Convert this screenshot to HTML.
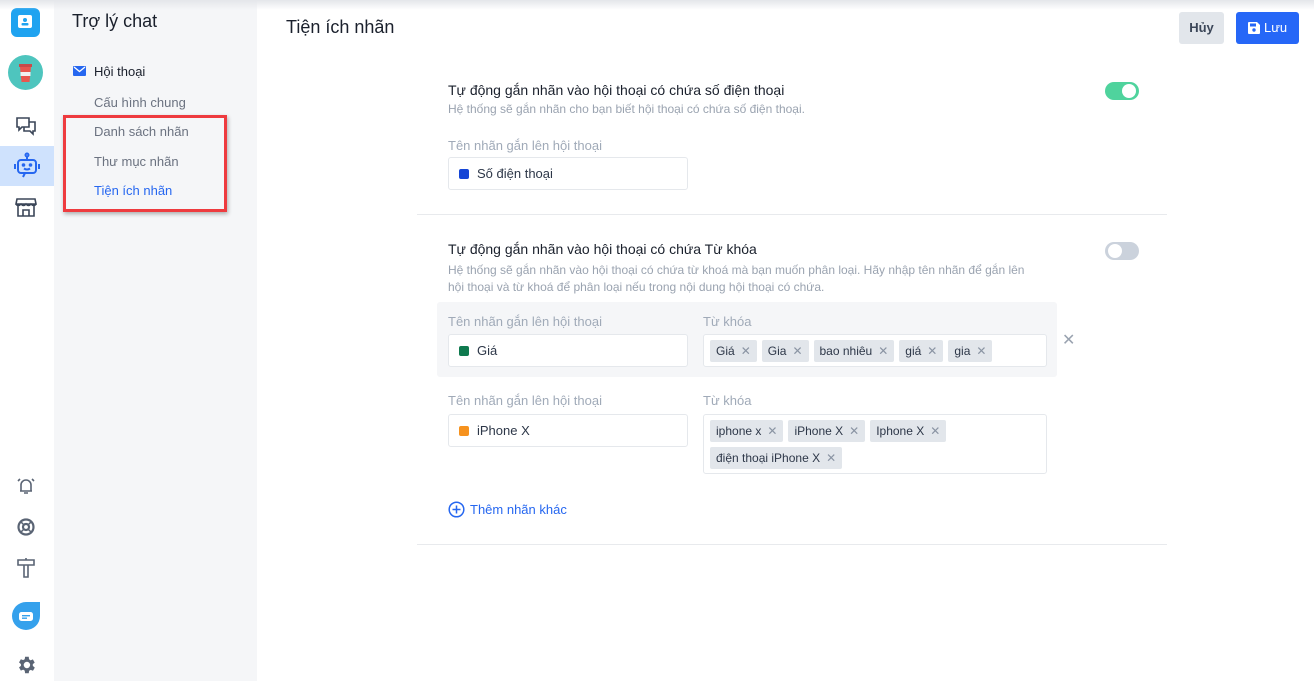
<!DOCTYPE html>
<html><head><meta charset="utf-8"><style>
*{box-sizing:border-box;margin:0;padding:0}
body{width:1314px;height:681px;overflow:hidden;font-family:"Liberation Sans",sans-serif;background:#fff;position:relative;color:#1a202c}
.abs{position:absolute}
.rail{left:0;top:0;width:54px;height:681px;background:#fff}
.side{left:54px;top:0;width:203px;height:681px;background:#f5f6f8}
.topsh{left:0;top:0;width:1314px;height:10px;background:linear-gradient(#e4e6ea,rgba(255,255,255,0));z-index:5}
.nav{left:94px;font-size:13px;color:#6b7280}
.lbl{font-size:13px;color:#a0aab8}
.inp{border:1px solid #e5e8ec;border-radius:3px;background:#fff;font-size:13px;color:#2d3748}
.sq{display:inline-block;width:10px;height:10px;border-radius:2px;vertical-align:-1px;margin-right:8px}
.tag{display:inline-block;background:#e2e6eb;border-radius:2px;height:22px;line-height:22px;padding:0 6px;font-size:12px;color:#2d3748;margin-right:5px}
.tag i{font-style:normal;color:#8a94a3;margin-left:6px;font-size:12px}
.tags{padding:5px 0 0 6px}
</style></head><body>
<div class="abs topsh"></div>
<div class="abs rail"></div>
<div class="abs side"></div>
<div class="abs" style="left:11px;top:8px;width:29px;height:29px;border-radius:6px;background:#1fa3f0"></div>
<svg class="abs" style="left:16px;top:13px" width="19" height="19" viewBox="0 0 19 19"><rect x="2" y="2" width="14" height="13" rx="2" fill="#fff"/><circle cx="9" cy="7" r="2" fill="#1fa3f0"/><rect x="5.5" y="10" width="7" height="2.5" rx="1" fill="#1fa3f0"/></svg>
<div class="abs" style="left:8px;top:55px;width:35px;height:35px;border-radius:50%;background:#4ec5be"></div>
<svg class="abs" style="left:8px;top:55px" width="35" height="35" viewBox="0 0 35 35"><rect x="11" y="9" width="13" height="3" fill="#c94a4a"/><path d="M12 12h11l-1.5 15h-8z" fill="#e8574f"/><rect x="12.5" y="17" width="10" height="4" fill="#f1f1f1"/></svg>
<svg class="abs" style="left:15px;top:116px" width="22" height="20" viewBox="0 0 22 20" fill="none" stroke="#3b4658" stroke-width="1.6"><path d="M2 2h12v9H7l-3 3v-3H2z"/><path d="M14 6h6v9h-2v3l-3-3H9v-4"/></svg>
<div class="abs" style="left:0;top:146px;width:54px;height:40px;background:#cfe2fd"></div>
<svg class="abs" style="left:13px;top:152px" width="28" height="28" viewBox="0 0 28 28" fill="none" stroke="#2667f0" stroke-width="2"><circle cx="14" cy="3" r="1.5"/><path d="M14 5v3"/><rect x="5" y="8" width="18" height="13" rx="3"/><path d="M2 12v5M26 12v5"/><circle cx="10.5" cy="13" r=".8" fill="#2667f0"/><circle cx="17.5" cy="13" r=".8" fill="#2667f0"/><path d="M11 16.5q3 2 6 0M12 21l-2 4"/></svg>
<svg class="abs" style="left:14px;top:196px" width="24" height="22" viewBox="0 0 24 22" fill="none" stroke="#3b4658" stroke-width="1.6"><path d="M3 3h18l1 5H2z M2 8q2 3 5 0q2.5 3 5 0q2.5 3 5 0q3 3 5 0M4 10v10h16V10M9 20v-6h6v6"/></svg>
<svg class="abs" style="left:16px;top:476px" width="20" height="20" viewBox="0 0 20 20" fill="none" stroke="#5a6474" stroke-width="1.6"><path d="M5 15V9a5 5 0 0110 0v6H4h12M8 17h4M2 5l2-2M18 5l-2-2"/></svg>
<svg class="abs" style="left:16px;top:517px" width="20" height="20" viewBox="0 0 20 20" fill="none" stroke="#5a6474" stroke-width="2.2"><circle cx="10" cy="10" r="7.5"/><circle cx="10" cy="10" r="3"/><path d="M4.7 4.7l3.2 3.2M15.3 4.7l-3.2 3.2M4.7 15.3l3.2-3.2M15.3 15.3l-3.2-3.2" stroke-width="1.5"/></svg>
<svg class="abs" style="left:16px;top:557px" width="20" height="22" viewBox="0 0 20 22" fill="none" stroke="#5a6474" stroke-width="1.6"><path d="M2 3h16v5H2zM8 8v12h4V8M10 1v2"/></svg>
<svg class="abs" style="left:11px;top:601px" width="30" height="30" viewBox="0 0 30 30"><path d="M15 1h14v14A14 14 0 1 1 15 1z" fill="#35a1ec"/><rect x="8" y="11" width="14" height="9" rx="2.5" fill="#fff"/><rect x="11" y="14" width="8" height="1.4" fill="#35a1ec"/><rect x="11" y="16.5" width="5" height="1.4" fill="#35a1ec"/></svg>
<svg class="abs" style="left:15px;top:654px" width="22" height="22" viewBox="0 0 24 24"><path fill="#5a6474" d="M19.4 13a7.8 7.8 0 000-2l2.1-1.6-2-3.5-2.5 1a7.4 7.4 0 00-1.7-1L15 3h-4l-.4 2.7a7.4 7.4 0 00-1.7 1l-2.5-1-2 3.5L6.5 11a7.8 7.8 0 000 2l-2.1 1.6 2 3.5 2.5-1a7.4 7.4 0 001.7 1L11 21h4l.4-2.7a7.4 7.4 0 001.7-1l2.5 1 2-3.5zM13 15.5a3.5 3.5 0 110-7 3.5 3.5 0 010 7z"/></svg>
<div class="abs" style="left:72px;top:11px;font-size:18px;color:#1a202c">Trợ lý chat</div>
<div class="abs" style="left:73px;top:66px;width:13px;height:10px;background:#2667f0;border-radius:1px"></div>
<svg class="abs" style="left:73px;top:66px" width="13" height="10"><path d="M1 1l5.5 4.5L12 1" stroke="#fff" stroke-width="1.3" fill="none"/></svg>
<div class="abs" style="left:94px;top:64px;font-size:13px;color:#1a202c">Hội thoại</div>
<div class="abs nav" style="top:95px">Cấu hình chung</div>
<div class="abs nav" style="top:124px">Danh sách nhãn</div>
<div class="abs nav" style="top:154px">Thư mục nhãn</div>
<div class="abs nav" style="top:183px;color:#2667f0">Tiện ích nhãn</div>
<div class="abs" style="left:63px;top:115px;width:164px;height:97px;border:3px solid #ee3b3f;box-shadow:1px 2px 4px rgba(0,0,0,.3)"></div>
<div class="abs" style="left:286px;top:17px;font-size:18px;color:#1a202c">Tiện ích nhãn</div>
<div class="abs" style="left:1179px;top:12px;width:45px;height:32px;border-radius:3px;background:#e2e6eb;font-size:13px;font-weight:bold;color:#3b4658;text-align:center;line-height:32px">Hủy</div>
<div class="abs" style="left:1236px;top:12px;width:63px;height:32px;border-radius:3px;background:#2667f7;font-size:13px;color:#fff;line-height:32px;padding-left:28px">Lưu</div>
<svg class="abs" style="left:1248px;top:22px" width="12" height="12" viewBox="0 0 12 12"><path d="M0 1a1 1 0 011-1h8l3 3v8a1 1 0 01-1 1H1a1 1 0 01-1-1z" fill="#fff"/><rect x="2" y="1.5" width="6" height="3" fill="#2667f7"/><circle cx="6" cy="8" r="1.7" fill="#2667f7"/></svg>
<div class="abs" style="left:448px;top:82px;font-size:14px;font-weight:500">Tự động gắn nhãn vào hội thoại có chứa số điện thoại</div>
<div class="abs" style="left:448px;top:102px;font-size:12px;color:#9aa3b0">Hệ thống sẽ gắn nhãn cho bạn biết hội thoại có chứa số điện thoại.</div>
<div class="abs" style="left:1105px;top:82px;width:34px;height:18px;border-radius:9px;background:#4fd39d"></div>
<div class="abs" style="left:1122px;top:84px;width:14px;height:14px;border-radius:50%;background:#fff"></div>
<div class="abs lbl" style="left:448px;top:138px">Tên nhãn gắn lên hội thoại</div>
<div class="abs inp" style="left:448px;top:157px;width:240px;height:33px;padding:8px 0 0 10px"><span class="sq" style="background:#1545d6"></span>Số điện thoại</div>
<div class="abs" style="left:417px;top:214px;width:750px;height:1px;background:#e8eaed"></div>
<div class="abs" style="left:448px;top:241px;font-size:14px;font-weight:500">Tự động gắn nhãn vào hội thoại có chứa Từ khóa</div>
<div class="abs" style="left:448px;top:262px;font-size:12px;color:#9aa3b0;line-height:17px;width:580px">Hệ thống sẽ gắn nhãn vào hội thoại có chứa từ khoá mà bạn muốn phân loại. Hãy nhập tên nhãn để gắn lên hội thoại và từ khoá để phân loại nếu trong nội dung hội thoại có chứa.</div>
<div class="abs" style="left:1105px;top:242px;width:34px;height:18px;border-radius:9px;background:#cbd2dc"></div>
<div class="abs" style="left:1108px;top:244px;width:14px;height:14px;border-radius:50%;background:#fff"></div>
<div class="abs" style="left:437px;top:302px;width:620px;height:75px;background:#f5f6f8;border-radius:3px"></div>
<div class="abs lbl" style="left:448px;top:314px">Tên nhãn gắn lên hội thoại</div>
<div class="abs lbl" style="left:703px;top:314px">Từ khóa</div>
<div class="abs inp" style="left:448px;top:334px;width:240px;height:33px;padding:8px 0 0 10px"><span class="sq" style="background:#0f7a4f"></span>Giá</div>
<div class="abs inp" style="left:703px;top:334px;width:344px;height:33px"><div class="tags"><span class="tag">Giá<i>✕</i></span><span class="tag">Gia<i>✕</i></span><span class="tag">bao nhiêu<i>✕</i></span><span class="tag">giá<i>✕</i></span><span class="tag">gia<i>✕</i></span></div></div>
<div class="abs" style="left:1062px;top:330px;font-size:16px;color:#9aa3b0">✕</div>
<div class="abs lbl" style="left:448px;top:393px">Tên nhãn gắn lên hội thoại</div>
<div class="abs lbl" style="left:703px;top:393px">Từ khóa</div>
<div class="abs inp" style="left:448px;top:414px;width:240px;height:33px;padding:8px 0 0 10px"><span class="sq" style="background:#f6921e"></span>iPhone X</div>
<div class="abs inp" style="left:703px;top:414px;width:344px;height:60px"><div class="tags" style="line-height:0"><span class="tag">iphone x<i>✕</i></span><span class="tag">iPhone X<i>✕</i></span><span class="tag">Iphone X<i>✕</i></span><br><span class="tag" style="margin-top:5px">điện thoại iPhone X<i>✕</i></span></div></div>
<svg class="abs" style="left:448px;top:501px" width="17" height="17" viewBox="0 0 17 17" fill="none" stroke="#2667f0" stroke-width="1.5"><circle cx="8.5" cy="8.5" r="7.3"/><path d="M8.5 4.5v8M4.5 8.5h8"/></svg>
<div class="abs" style="left:470px;top:502px;font-size:13px;color:#2667f0;font-weight:500">Thêm nhãn khác</div>
<div class="abs" style="left:417px;top:544px;width:750px;height:1px;background:#e8eaed"></div>
</body></html>
